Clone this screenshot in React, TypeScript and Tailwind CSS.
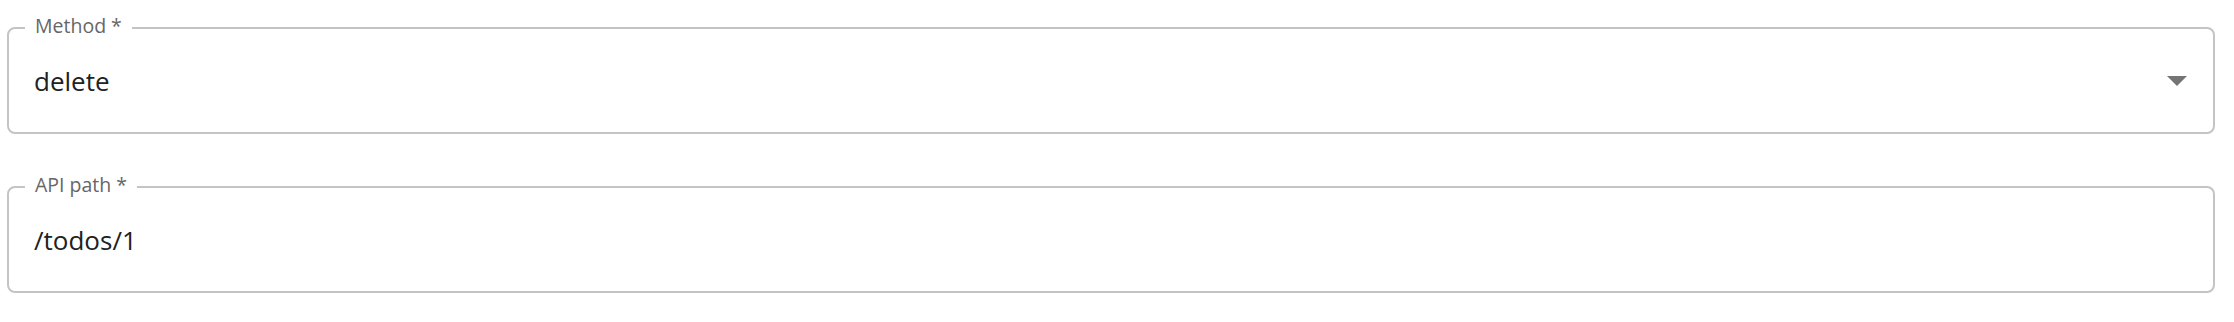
import React from "react";

function Field({ label, value, select }: { label: string; value: string; select?: boolean }) {
  return (
    <fieldset className="m-0 w-[2208px] rounded-[8px] border-2 border-[#c4c4c4] p-0">
      <legend className="ml-[16px] px-[10px] pb-[4px] text-[19.5px] leading-[24px] text-[#666666]">{label}</legend>
      <div className="flex h-[90px] items-start justify-between pl-[25px] pr-[26px] pt-[24px]">
        <span className="text-[26px] leading-[30px] text-[#212121]">{value}</span>
        {select && (
          <svg width="20" height="10" viewBox="0 0 10 5" className="mt-[10px]">
            <polygon points="0,0 10,0 5,5" fill="#757575" />
          </svg>
        )}
      </div>
    </fieldset>
  );
}

export default function App() {
  return (
    <div
      className="flex h-[322px] w-[2234px] flex-col gap-[39px] bg-white pl-[7px] pt-[14px]"
      style={{ fontFamily: "'Open Sans', 'Noto Sans', sans-serif" }}
    >
      <Field label="Method *" value="delete" select />
      <Field label="API path *" value="/todos/1" />
    </div>
  );
}
